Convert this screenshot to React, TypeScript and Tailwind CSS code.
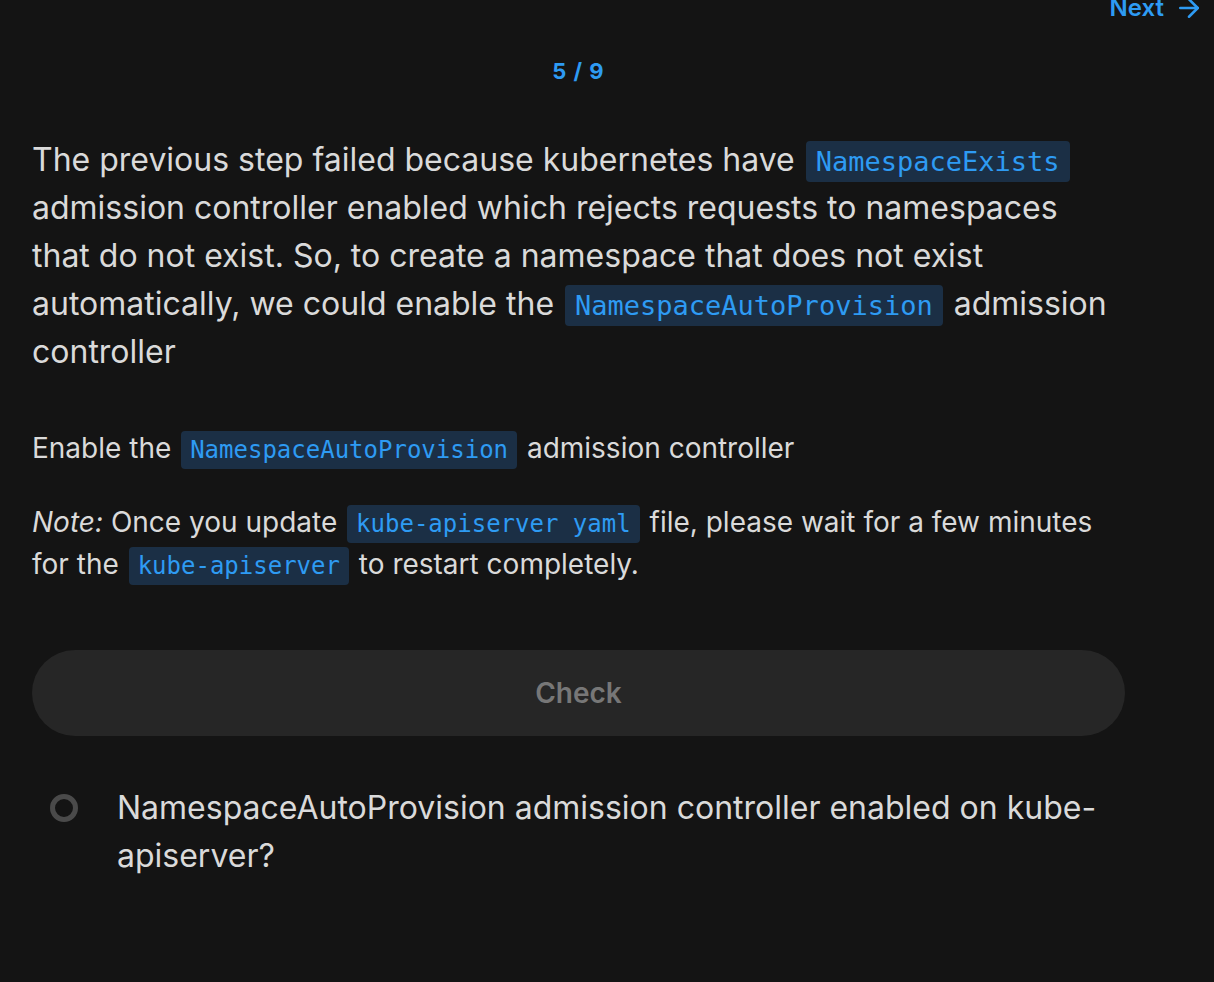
import { ArrowRight } from "lucide-react";

function Code(props: { children: string; size: "lg" | "md" }) {
  const { children, size } = props
  return (
    <span
      className={
        size === "lg"
          ? "mx-[2px] rounded-[4px] bg-[#1b2f45] px-[10px] py-[5px] text-[27px] leading-none text-[#2e9bf3] [font-family:'DejaVu_Sans_Mono',monospace]"
          : "mx-[2px] rounded-[4px] bg-[#1b2f45] px-[9px] py-[5px] text-[24px] leading-none text-[#2e9bf3] [font-family:'DejaVu_Sans_Mono',monospace]"
      }
    >
      {children}
    </span>
  )
}

export default function App() {
  return (
    <div className="min-h-screen overflow-hidden bg-[#141414] [font-family:Inter,'Noto_Sans',sans-serif]">
      <div className="-mt-[6px] flex h-[28px] justify-end pr-[10px]">
        <a className="flex items-center gap-[10px] text-[24px] leading-[28px] font-semibold text-[#2e9bf3]">
          Next <ArrowRight size={30} strokeWidth={2} />
        </a>
      </div>

      <div className="ml-[32px] w-[1093px]">
        <div className="mt-[35px] text-center text-[22px] leading-[28px] font-bold tracking-[1px] text-[#2e9bf3]">
          5 / 9
        </div>

        <p className="mt-[51px] w-[1080px] text-[32px] leading-[48px] text-[#dadada]">
          The previous step failed because kubernetes have <Code size="lg">NamespaceExists</Code>{" "}
          admission controller enabled which rejects requests to namespaces that do not exist. So, to
          create a namespace that does not exist automatically, we could enable the{" "}
          <Code size="lg">NamespaceAutoProvision</Code> admission controller
        </p>

        <p className="mt-[51px] text-[28px] leading-[42px] text-[#dadada]">
          Enable the <Code size="md">NamespaceAutoProvision</Code> admission controller
        </p>

        <p className="mt-[32px] text-[28px] leading-[42px] text-[#dadada]">
          <em>Note:</em> Once you update <Code size="md">kube-apiserver yaml</Code> file, please wait
          for a few minutes for the <Code size="md">kube-apiserver</Code> to restart completely.
        </p>

        <button className="mt-[65px] flex h-[86px] w-full items-center justify-center rounded-full bg-[#262626] text-[28px] font-semibold text-[#777777]">
          Check
        </button>

        <div className="mt-[48px] flex items-start">
          <div className="ml-[18px] mt-[10px] h-[28px] w-[28px] shrink-0 rounded-full border-[5px] border-[#4a4a4a]" />
          <p className="ml-[39px] text-[32px] leading-[48px] text-[#dadada]">
            NamespaceAutoProvision admission controller enabled on kube-apiserver?
          </p>
        </div>
      </div>
    </div>
  )
}
